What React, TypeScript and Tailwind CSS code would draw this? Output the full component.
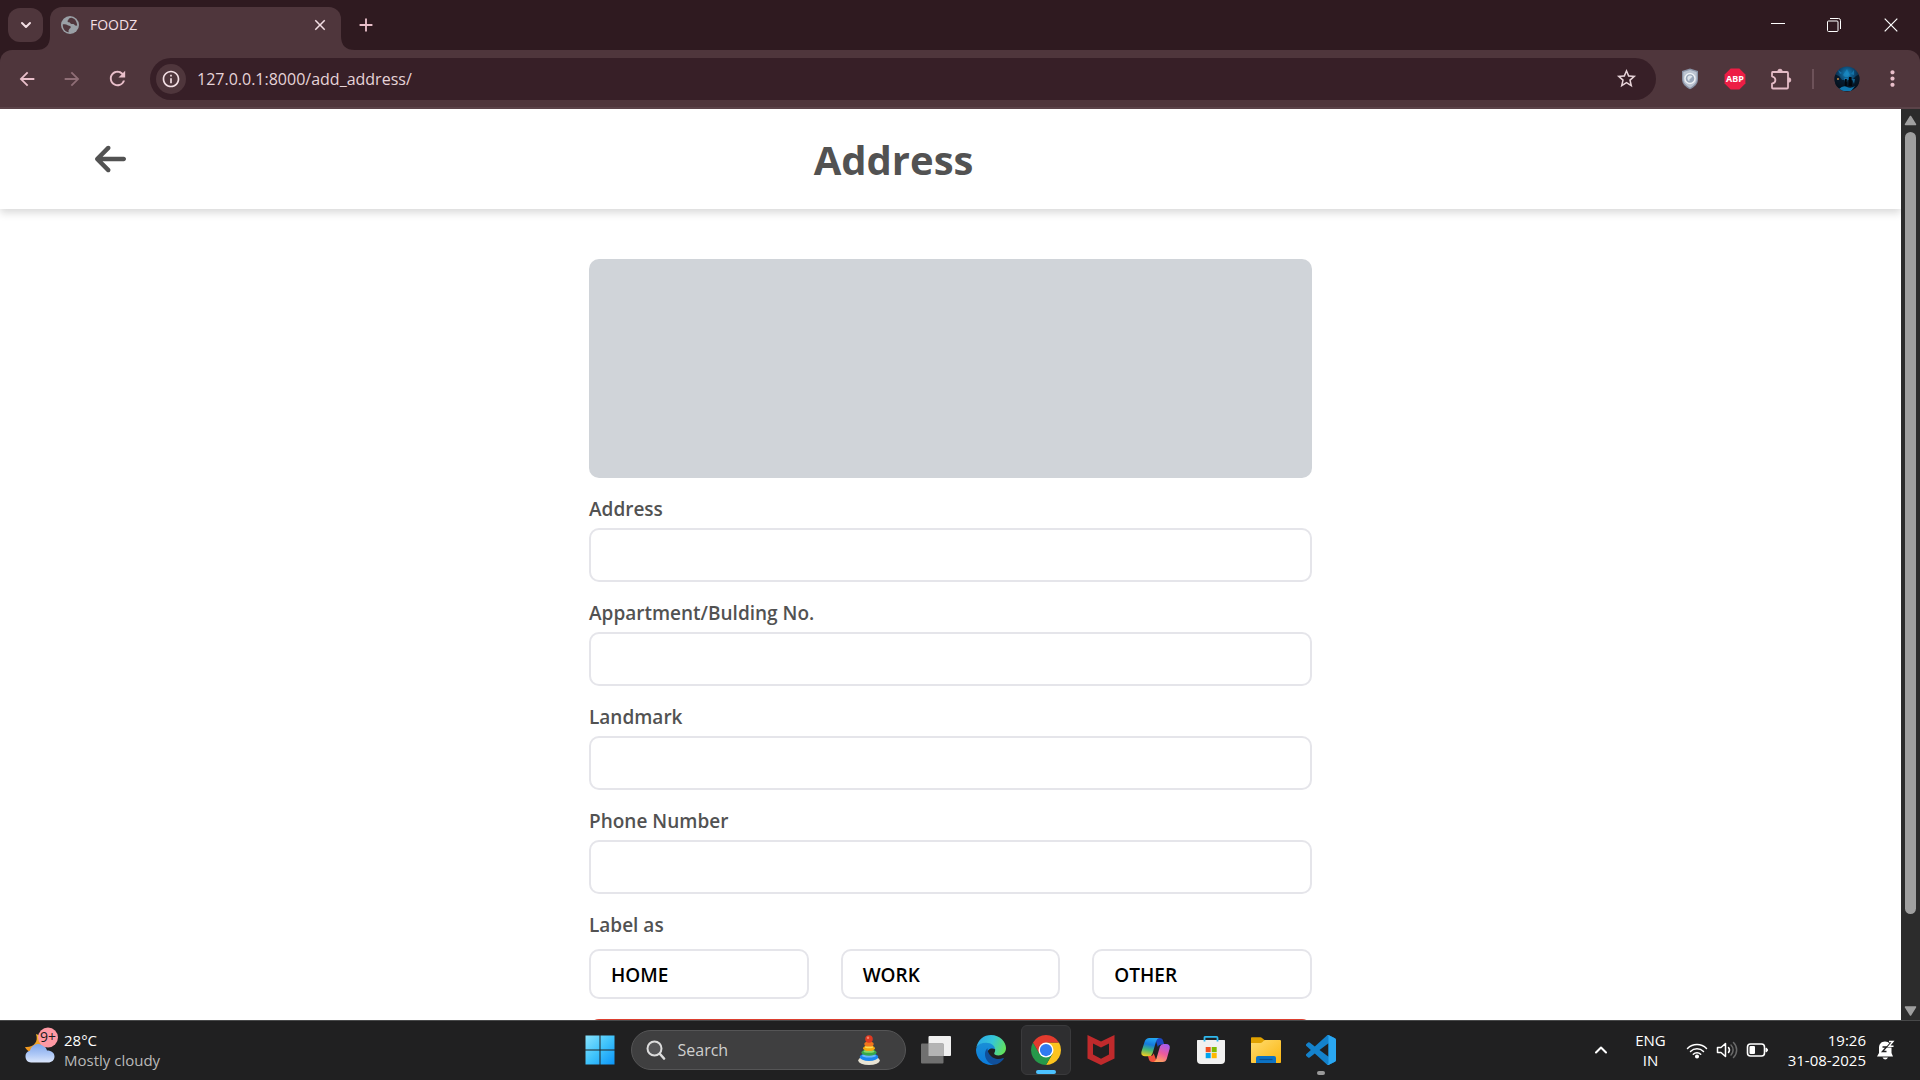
import React, { useState } from "react";
import {
  MdArrowBack,
  MdArrowForward,
  MdRefresh,
  MdOutlineInfo,
  MdStarBorder,
  MdMoreVert,
  MdClose,
  MdAdd,
} from "react-icons/md";
import { FaArrowLeft } from "react-icons/fa6";
import { ChevronDown, ChevronUp } from "lucide-react";

const GlobeIcon = () => (
  <svg viewBox="0 0 18 18" className="size-[18px]" aria-hidden="true">
    <circle cx="9" cy="9" r="9" fill="#9aa0a6" />
    <path
      d="M10.6 1.8C8.2 2 7.6 3 7.2 4.2 6.4 4.6 6.2 5.4 7 6c.8.4 1.6.2 2.2 1 .4.8 1.4 1.2 2.6 1 .8-.2 1.4.2 1.8 1 .4.6 1.4.8 2.6.6C16 6 14.2 2.6 10.6 1.8zM1.8 8.2c1.8-.2 4 .2 4.8 1 .8.6 2.4.4 3 1.2.5.8-.2 1.6-.8 2.2-.8.6-.6 1.4-1.4 2.2l.4 1.5C4.2 15.8 1.4 12.4 1.8 8.2z"
      fill="#4f363c"
    />
  </svg>
);

const ShieldIcon = () => (
  <svg viewBox="0 0 18 22" className="h-[22px] w-[18px]" aria-hidden="true">
    <path d="M9 .5 17 3v8c0 5-3.5 8-8 10.3C4.5 19 1 16 1 11V3z" fill="#8a93a6" />
    <path d="M9 2 15.7 4v7c0 4-2.9 6.7-6.7 8.7C5.2 17.7 2.3 15 2.3 11V4z" fill="#bcc4d2" />
    <circle cx="9" cy="10.5" r="5" fill="#9aa7ba" stroke="#eef1f5" strokeWidth="1.4" />
    <path d="M6.5 9c1.5-1.8 3.5-1.8 5-.6-1 .6-1 1.6-2 2.2s-1.6 1.6-.8 2.6c-1.6-.4-2.8-2-2.2-4.2z" fill="#dfe5ec" />
  </svg>
);

const AdblockIcon = () => (
  <svg viewBox="0 0 22 22" className="size-[22px]" aria-hidden="true">
    <path d="M6.6.6h8.8l6 6v8.800l-6 6H6.600l-6-6V6.600z" fill="#ed1e45" />
    <text x="11" y="14.4" textAnchor="middle" fontFamily="Noto Sans, sans-serif" fontSize="9" fontWeight="700" fill="#fff">
      ABP
    </text>
  </svg>
);

const PuzzleIcon = () => (
  <svg viewBox="0 0 22 22" className="size-[22px]" fill="none" stroke="#e4bcc6" strokeWidth="1.8" strokeLinejoin="round" aria-hidden="true">
    <path d="M2.5 4h14.500q1 0 1 1v14.500q0 1-1 1H3q-1 0-1-1v-3.800c2.600-.6 3.400-1.900 3.400-3.700S4.600 9 2 8.300V5q0-1 .5-1z" />
    <path d="M7.8 3.400a2.200 2.200 0 0 1 4.400 0zM18.600 9.800a2.200 2.200 0 0 1 0 4.400z" fill="#e4bcc6" strokeWidth="1" />
  </svg>
);

const Avatar = () => (
  <svg viewBox="0 0 26 26" className="size-[26px]" aria-hidden="true">
    <defs>
      <radialGradient id="avatarGlow" cx=".5" cy=".3" r=".6">
        <stop offset="0" stopColor="#1583bd" />
        <stop offset=".55" stopColor="#0b4068" />
        <stop offset="1" stopColor="#061625" />
      </radialGradient>
      <clipPath id="avatarClip">
        <circle cx="13" cy="13" r="12.5" />
      </clipPath>
    </defs>
    <g clipPath="url(#avatarClip)">
      <rect width="26" height="26" fill="url(#avatarGlow)" />
      <path d="M0 8 5 10l3 4h10l4-4 4-2v12l-5 2H6l-6-2z" fill="#05101c" opacity=".75" />
      <path d="M9 9 13 3l3 6-2 2h-3z" fill="#1c8fca" opacity=".6" />
      <path d="M4 4l4 3-2 1zM20 4l-3 4 3 1zM10 12h4l-1 4h-2zM18 13h3l-1 5z" fill="#1781ba" opacity=".7" />
      <path d="M5 23q4-4 8-2t8-1l-4 5H8z" fill="#0f78b0" />
      <path d="M15 11h2.500l.5 9h-3.500zM11 13h1.800v7h-2z" fill="#02060b" />
      <circle cx="4" cy="13" r="1" fill="#c58a45" />
    </g>
  </svg>
);

const WeatherIcon = () => (
  <svg viewBox="0 0 36 38" className="h-[38px] w-9" aria-hidden="true">
    <defs>
      <linearGradient id="moon" x1="0" y1="0" x2="0" y2="1">
        <stop offset="0" stopColor="#f3b62c" />
        <stop offset="1" stopColor="#ee8d1c" />
      </linearGradient>
      <linearGradient id="cloud" x1="0" y1="0" x2="0" y2="1">
        <stop offset="0" stopColor="#7fa6ea" />
        <stop offset=".55" stopColor="#adc7f6" />
        <stop offset="1" stopColor="#dbe6fb" />
      </linearGradient>
    </defs>
    <path d="M12 7c3 8-3 14-11 13 3 6 10 8 16 5 6-4 6-14-5-18z" fill="url(#moon)" />
    <path d="M7 35.500a6 6 0 0 1-1-11.800C7 19.500 10.500 17 14.500 17c4.500 0 7.700 3 8.500 6.500 4.500 0 7.500 2.500 7.500 6 0 3.700-2.800 6-6.500 6z" fill="url(#cloud)" />
    <circle cx="24" cy="10.500" r="10" fill="#ff99a4" />
    <text x="24" y="15" textAnchor="middle" fontFamily="Open Sans, sans-serif" fontSize="14" fill="#1b1b1b">
      9+
    </text>
  </svg>
);

const WindowsIcon = () => (
  <svg viewBox="0 0 30 30" className="size-[30px]" aria-hidden="true">
    <defs>
      <linearGradient id="win" gradientUnits="userSpaceOnUse" x1="0" y1="0" x2="30" y2="30">
        <stop offset="0" stopColor="#8be4fd" />
        <stop offset=".5" stopColor="#3fc3fb" />
        <stop offset="1" stopColor="#0a93f8" />
      </linearGradient>
    </defs>
    <path d="M.5.5h14v14H.5zM15.500.5h14v14h-14zM.5 15.500h14v14H.5zM15.500 15.500h14v14h-14z" fill="url(#win)" />
  </svg>
);

const SearchIcon = () => (
  <svg viewBox="0 0 20 20" className="size-5" fill="none" stroke="#dcdcdc" strokeLinecap="round" aria-hidden="true">
    <circle cx="8.500" cy="8.500" r="7" strokeWidth="2" fill="#565658" />
    <path d="m14 14 4 4.500" strokeWidth="2.600" />
  </svg>
);

const RingToyIcon = () => (
  <svg viewBox="0 0 24 32" className="h-8 w-6" aria-hidden="true">
    <ellipse cx="12" cy="26.500" rx="10.800" ry="4.500" fill="#e9e4d4" />
    <ellipse cx="12" cy="23" rx="9.300" ry="4" fill="#1b86ee" />
    <ellipse cx="12" cy="21.800" rx="7" ry="1.800" fill="#69b6f8" />
    <ellipse cx="12" cy="18.500" rx="7.600" ry="3.300" fill="#36a84b" />
    <ellipse cx="12" cy="17.400" rx="5.500" ry="1.400" fill="#8bd966" />
    <ellipse cx="12" cy="14.200" rx="6" ry="2.900" fill="#f3a90c" />
    <ellipse cx="12" cy="13.200" rx="4" ry="1.100" fill="#fbdc53" />
    <ellipse cx="12" cy="10" rx="4.700" ry="2.600" fill="#f2761c" />
    <circle cx="12" cy="5" r="3.800" fill="#dd3a22" />
    <circle cx="11" cy="3.800" r="1.200" fill="#f58268" />
  </svg>
);

const TaskViewIcon = () => (
  <svg viewBox="0 0 30 30" className="size-[30px]" aria-hidden="true">
    <rect x="7.500" y="1" width="22.500" height="20" rx="1" fill="#f0f0f0" />
    <rect x="0" y="8.500" width="22.500" height="20" rx="1" fill="#707070" />
    <path d="M7.500 8.500h15V21h-15z" fill="#b4b4b4" />
  </svg>
);

const EdgeIcon = () => (
  <svg viewBox="0 0 30 30" className="size-[30px]" aria-hidden="true">
    <defs>
      <linearGradient id="edgeTop" x1="0" y1=".3" x2="1" y2=".6">
        <stop offset="0" stopColor="#2aa9e8" />
        <stop offset=".5" stopColor="#35c6d8" />
        <stop offset="1" stopColor="#63e25a" />
      </linearGradient>
      <linearGradient id="edgeBody" x1="0" y1="0" x2="0" y2="1">
        <stop offset="0" stopColor="#1a8fd6" />
        <stop offset="1" stopColor="#0b7bdc" />
      </linearGradient>
    </defs>
    <path d="M0 15C.5 9.500 5.500 7 10 7c6 0 9.500 4 9.500 7.500C16 12 11 14 11 19c0 5 3.500 9 7 10.800C8 31 0 24 0 15z" fill="url(#edgeBody)" />
    <path d="M11.500 13.300C8.500 15.500 8 21 11 25.500c1.700 2.600 4.300 4.300 7 4.300 4 0 8-3 9.800-6.200.3-.6-.1-.9-.7-.6-2.300 1.100-5 1.300-7.300.7-5-1.300-8.300-5.700-8.300-10.400z" fill="#10509c" />
    <path d="M.3 12.500C2 4.500 8 0 15 0c9 0 15 7 15 13 0 4.800-3.800 7.400-7.500 7.400-3 0-4.300-.9-4.300-1.900 0-.7 1-1.600 1-3.700 0-3.400-3.700-7-9.200-7C5.500 7.800 2 9.500.3 12.500z" fill="url(#edgeTop)" />
  </svg>
);

const ChromeIcon = () => (
  <svg viewBox="0 0 24 24" className="size-[30px]" aria-hidden="true">
    <path d="M22.390 6A12 12 0 0 1 12 24l5.200-9L12 6z" fill="#fcc31e" />
    <path d="M1.610 6A12 12 0 0 0 12 24l5.200-9H6.800z" fill="#26994a" />
    <path d="M1.610 6a12 12 0 0 1 20.780 0H12l-5.200 9z" fill="#e33b2e" />
    <circle cx="12" cy="12" r="6" fill="#fff" />
    <circle cx="12" cy="12" r="4.900" fill="#2f7bf0" />
  </svg>
);

const McAfeeIcon = () => (
  <svg viewBox="0 0 28 30" className="h-[30px] w-7" aria-hidden="true">
    <path fillRule="evenodd" d="M.5 0 14 6.500 27.500 0v23.500L14 30 .5 23.500zM6 8.500v11l8 4.200 8-4.200v-11l-8 4z" fill="#c02a2c" />
  </svg>
);

const CopilotIcon = () => (
  <svg viewBox="0 0 30 30" className="size-[30px]" aria-hidden="true">
    <defs>
      <linearGradient id="copLeft" x1=".5" y1="0" x2=".3" y2="1">
        <stop offset="0" stopColor="#22a7f2" />
        <stop offset=".35" stopColor="#1679dc" />
        <stop offset=".65" stopColor="#45b775" />
        <stop offset="1" stopColor="#f1cd22" />
      </linearGradient>
      <linearGradient id="copRight" x1=".7" y1="0" x2=".3" y2="1">
        <stop offset="0" stopColor="#a65cf0" />
        <stop offset=".5" stopColor="#ec5a9d" />
        <stop offset="1" stopColor="#ffa65c" />
      </linearGradient>
    </defs>
    <path d="M14 3h4.500q3 0 3.700 3l1 3.500H20q-2.500 0-3.200 2.500z" fill="#1c48c4" />
    <path d="M8.500 3H18q-2 .5-2.800 3l-3.700 12.500q-.8 2.700-3.500 2.700H4q-4.500 0-3.500-4.700L3.700 6.500Q4.800 3 8.500 3z" fill="url(#copLeft)" />
    <path d="M16 27h-4.500q-3 0-3.700-3L7 21h2.500q2.500 0 3.200-2.500z" fill="#f0503c" />
    <path d="M21.500 27H12.500q2-.5 2.800-3L19 11.500Q19.800 9 22.500 9H25q4.500 0 3.700 4.500l-2.800 10Q25 27 21.500 27z" fill="url(#copRight)" />
  </svg>
);

const StoreIcon = () => (
  <svg viewBox="0 0 30 30" className="size-[30px]" aria-hidden="true">
    <path d="M1 5.500q0-.5.500-.5h27q.5 0 .5.500V25q0 4-4 4H5q-4 0-4-4z" fill="#f1f1f1" />
    <path d="M8.500 6.500V2.700Q8.500 1.800 9.500 1.800h11q1 0 1 .9v3.800" fill="none" stroke="#2fb9ee" strokeWidth="1.800" />
    <path d="M9.700 12h5v5.200h-5z" fill="#f25022" />
    <path d="M15.700 12h5v5.200h-5z" fill="#7fba00" />
    <path d="M9.700 18h5v5.200h-5z" fill="#00a4ef" />
    <path d="M15.700 18h5v5.200h-5z" fill="#ffb900" />
  </svg>
);

const ExplorerIcon = () => (
  <svg viewBox="0 0 30 30" className="size-[30px]" aria-hidden="true">
    <defs>
      <linearGradient id="folder" x1="0" y1="0" x2="1" y2="1">
        <stop offset="0" stopColor="#ffdc70" />
        <stop offset="1" stopColor="#fbb50f" />
      </linearGradient>
    </defs>
    <path d="M0 3q0-.8.800-.8h8.700q.8 0 1.500.7L13.500 5H20v6H0z" fill="#e0a100" />
    <path d="M0 8h9.500q1 0 1.700-.7L13 5.500q.7-.5 1.500-.5H29q1 0 1 1v21.200q0 .8-.8.8H.8q-.8 0-.8-.8z" fill="url(#folder)" />
    <path d="M5 28v-5q0-2 2-2h16q2 0 2 2v5z" fill="#0c72c4" />
    <path d="M8.500 24.500h13" stroke="#0a4f92" strokeWidth="1.200" />
  </svg>
);

const VSCodeIcon = () => (
  <svg viewBox="0 0 24 24" className="size-[30px]" aria-hidden="true">
    <path
      d="M23.150 2.587L18.210.21a1.494 1.494 0 0 0-1.705.29l-9.460 8.630-4.120-3.128a.999.999 0 0 0-1.276.057L.327 7.261A1 1 0 0 0 .326 8.740L3.899 12 .326 15.260a1 1 0 0 0 .001 1.479L1.650 17.940a.999.999 0 0 0 1.276.057l4.120-3.128 9.460 8.630a1.492 1.492 0 0 0 1.704.290l4.942-2.377A1.500 1.500 0 0 0 24 20.060V3.939a1.500 1.500 0 0 0-.850-1.352zm-5.146 14.861L10.826 12l7.178-5.448v10.896z"
      fill="#1482cc"
    />
    <path d="M18 .15q.2 0 .4.100l4.750 2.340q.85.450.85 1.350v16.120q0 .9-.850 1.350L18.400 23.800q-.9.350-1.700-.2 1.300.2 1.300-1.100v-21q0-1.300-1.300-1.100.5-.4 1.300-.25z" fill="#2aa7f2" />
  </svg>
);

const WifiIcon = () => (
  <svg viewBox="0 0 22 18" className="h-[18px] w-[22px]" fill="none" stroke="#fff" strokeWidth="1.500" strokeLinecap="round" aria-hidden="true">
    <path d="M1.500 7.500a13.400 13.400 0 0 1 19 0M4.500 10.500a9.200 9.200 0 0 1 13 0M7.300 13.300a5.200 5.200 0 0 1 7.400 0" />
    <circle cx="11" cy="15.500" r="1.300" fill="#fff" />
  </svg>
);

const SpeakerIcon = () => (
  <svg viewBox="0 0 22 18" className="h-[18px] w-[22px]" fill="none" stroke="#fff" strokeWidth="1.500" strokeLinecap="round" strokeLinejoin="round" aria-hidden="true">
    <path d="M1.500 6.500H5l4.500-4v13L5 11.500H1.500z" />
    <path d="M12.500 6.500a4 4 0 0 1 0 5" />
    <path d="M15 4a7 7 0 0 1 0 10M17.500 1.500a10.500 10.500 0 0 1 0 15" stroke="#6a6a6a" />
  </svg>
);

const BatteryIcon = () => (
  <svg viewBox="0 0 22 14" className="h-3.5 w-[22px]" aria-hidden="true">
    <rect x="1.500" y="1" width="17" height="12" rx="3" fill="none" stroke="#fff" strokeWidth="1.600" />
    <rect x="3.500" y="3" width="5.500" height="8" rx="1" fill="#fff" />
    <path d="M20 5q1.500.5 1.500 2T20 9z" fill="#fff" stroke="#fff" />
  </svg>
);

const BellIcon = () => (
  <svg viewBox="0 0 20 20" className="size-5" aria-hidden="true">
    <path d="M9 1.500c-4 0-6 3-6 6V13L1 16.500h16L15.500 13V7.500c0-3-2.500-6-6.500-6zM6.500 17.500h5.500q-1 2-2.700 2t-2.800-2z" fill="#fff" />
    <path d="M6.500 7h4L6.500 11.500h4" fill="none" stroke="#202021" strokeWidth="1.400" />
    <path d="M12.500 1.500h4L12.500 6.200h4.500" fill="none" stroke="#202021" strokeWidth="2.600" />
    <path d="M13 1.500h4L13 6.200h4.500" fill="none" stroke="#fff" strokeWidth="1.400" />
  </svg>
);

const WindowControls = () => (
  <div className="flex h-full">
    <button aria-label="Minimize" className="grid h-full w-[57px] place-items-center">
      <svg viewBox="0 0 14 14" className="size-3.5" stroke="#fff" aria-hidden="true">
        <path d="M0 5.500h14" />
      </svg>
    </button>
    <button aria-label="Restore" className="grid h-full w-[56px] place-items-center">
      <svg viewBox="0 0 14 14" className="size-3.5" fill="none" stroke="#fff" aria-hidden="true">
        <rect x=".5" y="3" width="10.500" height="10.500" rx="1" />
        <path d="M3 .5h8.500q2 0 2 2V11" />
      </svg>
    </button>
    <button aria-label="Close window" className="grid h-full w-[58px] place-items-center">
      <svg viewBox="0 0 14 14" className="size-3.5" fill="none" stroke="#fff" strokeWidth="1.200" aria-hidden="true">
        <path d="m.7.7 12.600 12.600M13.300.7.700 13.300" />
      </svg>
    </button>
  </div>
);

const TabFlare = ({ flip = false }: { flip?: boolean }) => (
  <svg viewBox="0 0 14 14" className={flip ? "size-3.5 -scale-x-100 self-end" : "size-3.5 self-end"} aria-hidden="true">
    <path d="M14 0v14H0Q14 14 14 0z" fill="#4f363c" />
  </svg>
);

const TabStrip = () => (
  <div className="flex h-[50px] items-stretch bg-[#2f1a20]">
    <div className="flex w-9 items-center justify-end">
      <button aria-label="Search tabs" className="-mr-[7px] grid h-[34px] w-[35px] shrink-0 place-items-center rounded-xl bg-[#4f363c] text-[#f3dfe4]">
        <ChevronDown size={16} strokeWidth={3} />
      </button>
    </div>
    <TabFlare />
    <div className="mt-[7px] flex w-[291px] items-center rounded-t-xl bg-[#4f363c] px-3 pb-2 pl-[11px] text-[#f3dfe4]">
      <GlobeIcon />
      <span className="ml-[11px] flex-1 font-['Open_Sans',sans-serif] text-[14px] leading-5">FOODZ</span>
      <button aria-label="Close tab">
        <MdClose size={18} />
      </button>
    </div>
    <TabFlare flip />
    <button aria-label="New tab" className="text-[#e9bfca]">
      <MdAdd size={22} />
    </button>
    <div className="ml-auto">
      <WindowControls />
    </div>
  </div>
);

const Toolbar = () => (
  <div className="bg-[#2f1a20]">
    <div className="flex h-[59px] items-center rounded-t-xl border-b-2 border-[#5b4349] bg-[#4f363c] text-[#e9bfca]">
      <button aria-label="Back" className="ml-4">
        <MdArrowBack size={22} />
      </button>
      <button aria-label="Forward" className="ml-[23px] text-[#8f6e76]">
        <MdArrowForward size={22} />
      </button>
      <button aria-label="Reload" className="ml-[23px]">
        <MdRefresh size={23} />
      </button>
      <div className="ml-[21px] flex h-[42px] flex-1 items-center rounded-full bg-[#371f27] px-1.5 text-[#e6d3d8]">
        <button aria-label="View site information" className="grid size-[30px] place-items-center rounded-full bg-[#4f363c] text-[#f3dfe4]">
          <MdOutlineInfo size={20} />
        </button>
        <input
          aria-label="Address and search bar"
          defaultValue="127.0.0.1:8000/add_address/"
          className="ml-[11px] min-w-0 flex-1 bg-transparent font-['Open_Sans',sans-serif] text-[16px] outline-none"
        />
        <button aria-label="Bookmark this tab" className="mr-3">
          <MdStarBorder size={23} />
        </button>
      </div>
      <div className="ml-[25px] flex items-center">
        <button aria-label="Shield extension">
          <ShieldIcon />
        </button>
        <button aria-label="Adblock Plus" className="ml-[25px]">
          <AdblockIcon />
        </button>
        <button aria-label="Extensions" className="ml-6">
          <PuzzleIcon />
        </button>
        <span className="ml-5 h-5 w-0.5 bg-[#6d5259]" />
        <button aria-label="Profile" className="ml-5">
          <Avatar />
        </button>
        <button aria-label="Menu" className="mr-[15px] ml-5">
          <MdMoreVert size={25} />
        </button>
      </div>
    </div>
  </div>
);

const FIELDS = [
  { id: "address", label: "Address" },
  { id: "building", label: "Appartment/Bulding No." },
  { id: "landmark", label: "Landmark" },
  { id: "phone", label: "Phone Number" },
];

const AddressPage = () => {
  const [kind, setKind] = useState("");
  return (
    <div className="flex min-w-0 flex-1 flex-col overflow-hidden bg-white font-['Open_Sans',sans-serif]">
      <header className="flex h-[100px] shrink-0 items-center justify-between pr-60 pl-[5%] text-[#525252] shadow-[0_4px_8px_rgba(0,0,0,0.15)]">
        <a href="#back" aria-label="Go back">
          <FaArrowLeft size={36} className="h-9 w-[31px]" />
        </a>
        <h1 className="pt-0.5 text-[40px] leading-[50px] font-bold">Address</h1>
        <span />
      </header>
      <form className="mx-auto mt-[50px] w-[723px] max-w-full shrink-0" onSubmit={(e) => e.preventDefault()}>
        <div className="h-[219px] rounded-[10px] bg-[#d0d4d9]" />
        {FIELDS.map((f) => (
          <div key={f.id}>
            <label htmlFor={f.id} className="mt-4 mb-1 block text-[19px] leading-[30px] font-semibold text-[#525252]">
              {f.label}
            </label>
            <input id={f.id} name={f.id} className="block h-[54px] w-full rounded-[10px] border-2 border-[#e5e5ea] px-5 text-[19px] outline-none" />
          </div>
        ))}
        <p id="label-as" className="mt-4 mb-[9px] text-[19px] leading-[30px] font-semibold text-[#525252]">
          Label as
        </p>
        <div role="group" aria-labelledby="label-as" className="grid grid-cols-3 gap-8">
          {["HOME", "WORK", "OTHER"].map((k) => (
            <button
              key={k}
              type="button"
              aria-pressed={kind === k}
              onClick={() => setKind(k)}
              className="h-[50px] rounded-[10px] border-2 border-[#e5e5ea] px-5 pt-0.5 text-left text-[19px] font-semibold text-black"
            >
              {k}
            </button>
          ))}
        </div>
        <button type="submit" aria-label="Save address" className="mt-5 block h-14 w-full rounded-[10px] bg-[#dc3f2f]" />
      </form>
    </div>
  );
};

const Scrollbar = () => (
  <div className="flex w-[19px] shrink-0 flex-col items-center justify-between bg-[#2c2c2c]">
    <svg viewBox="0 0 19 23" className="h-[23px] w-[19px]" aria-hidden="true">
      <path d="m9.500 7.500 5 8h-10z" fill="#9f9f9f" stroke="#9f9f9f" strokeWidth="1.500" strokeLinejoin="round" />
    </svg>
    <div className="flex w-[11px] flex-1 flex-col">
      <div className="h-[90%] rounded-full bg-[#9f9f9f]" />
    </div>
    <svg viewBox="0 0 19 19" className="size-[19px]" aria-hidden="true">
      <path d="m9.500 14 5-8h-10z" fill="#9f9f9f" stroke="#9f9f9f" strokeWidth="1.500" strokeLinejoin="round" />
    </svg>
  </div>
);

const APPS = [
  { name: "Task view", icon: <TaskViewIcon />, state: "none" },
  { name: "Microsoft Edge", icon: <EdgeIcon />, state: "none" },
  { name: "Google Chrome", icon: <ChromeIcon />, state: "active" },
  { name: "McAfee", icon: <McAfeeIcon />, state: "none" },
  { name: "Copilot", icon: <CopilotIcon />, state: "none" },
  { name: "Microsoft Store", icon: <StoreIcon />, state: "none" },
  { name: "File Explorer", icon: <ExplorerIcon />, state: "none" },
  { name: "Visual Studio Code", icon: <VSCodeIcon />, state: "open" },
];

const Taskbar = () => (
  <footer className="grid h-[60px] shrink-0 grid-cols-[1fr_auto_1fr] items-center border-t border-[#48494a] bg-[#202021] pb-px font-['Open_Sans',sans-serif] text-[15px] leading-5 text-white">
    <button className="flex items-center gap-1 justify-self-start pl-6 text-left">
      <span className="-mt-2">
        <WeatherIcon />
      </span>
      <span>
        <span className="block">28°C</span>
        <span className="block text-[#b9b9b9]">Mostly cloudy</span>
      </span>
    </button>
    <div className="flex items-center gap-[5px]">
      <button aria-label="Start" className="grid size-[50px] place-items-center">
        <WindowsIcon />
      </button>
      <label className="ml-px flex h-10 w-[275px] items-center rounded-full border border-[#555556] bg-[#3f3f40] pr-6 pl-[14px]">
        <SearchIcon />
        <input
          type="text"
          aria-label="Search"
          placeholder="Search"
          className="ml-3 min-w-0 flex-1 bg-transparent text-[16px] outline-none placeholder:text-[#cfcfcf]"
        />
        <RingToyIcon />
      </label>
      {APPS.map((a) => (
        <button
          key={a.name}
          aria-label={a.name}
          className={
            a.state === "active"
              ? "relative grid size-[50px] place-items-center rounded-md border border-[#3a3a3c] bg-[#2e2e30]"
              : "relative grid size-[50px] place-items-center"
          }
        >
          {a.icon}
          {a.state === "active" && <span className="absolute bottom-0 h-1 w-5 rounded-full bg-[#4cc2ff]" />}
          {a.state === "open" && <span className="absolute bottom-0 h-1 w-2 rounded-full bg-[#9a9a9a]" />}
        </button>
      ))}
    </div>
    <div className="flex items-center justify-self-end pr-6">
      <button aria-label="Show hidden icons" className="mr-6">
        <ChevronUp size={20} strokeWidth={2.5} />
      </button>
      <button className="mr-5 text-center leading-5">
        <span className="block">ENG</span>
        <span className="block">IN</span>
      </button>
      <button aria-label="Network, sound and battery" className="mr-5 flex items-center gap-2">
        <WifiIcon />
        <SpeakerIcon />
        <BatteryIcon />
      </button>
      <button className="text-right">
        <span className="block">19:26</span>
        <span className="block">31-08-2025</span>
      </button>
      <button aria-label="Notifications" className="ml-2.5">
        <BellIcon />
      </button>
    </div>
  </footer>
);

export default function App() {
  return (
    <div className="flex h-screen flex-col overflow-hidden">
      <TabStrip />
      <Toolbar />
      <main className="flex min-h-0 flex-1">
        <AddressPage />
        <Scrollbar />
      </main>
      <Taskbar />
    </div>
  );
}
